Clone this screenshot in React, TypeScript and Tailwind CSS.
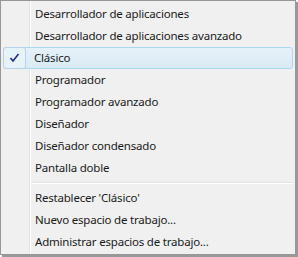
const top = [
  'Desarrollador de aplicaciones',
  'Desarrollador de aplicaciones avanzado',
  'Clásico',
  'Programador',
  'Programador avanzado',
  'Diseñador',
  'Diseñador condensado',
  'Pantalla doble',
]

const bottom = ["Restablecer 'Clásico'", 'Nuevo espacio de trabajo...', 'Administrar espacios de trabajo...']

function Item({ label, checked }: { label: string; checked?: boolean }) {
  if (checked) {
    return (
      <div className="h-[22px] px-[2px]">
        <div className="relative flex h-full items-center rounded-[3px] border border-[#a9d9ee] bg-[linear-gradient(to_bottom,#e6f1f8,#d9eaf4)]">
          <span className="flex h-[22px] w-[23px] -ml-px -mt-px items-center justify-center self-start rounded-[3px] border border-[#b6d2e6] bg-[#e8f2f9]">
            <svg width="11" height="10" viewBox="0 0 11 10">
              <path d="M1.5 5 L4 8 L9.5 1" fill="none" stroke="#1b2a8e" strokeWidth="1.6" />
            </svg>
          </span>
          <span className="ml-[8px]">{label}</span>
        </div>
      </div>
    )
  }
  return (
    <div className="flex h-[22px] items-center pl-[34px]">
      <span>{label}</span>
    </div>
  )
}

export default function App() {
  return (
    <div className="h-[257px] w-[298px] bg-white">
      <div
        className="flex h-[255px] w-[296px] flex-col border border-[#979797] bg-[#f0f0f0] bg-[linear-gradient(to_right,#f0f0f0_28px,#e2e3e3_28px,#e2e3e3_29px,#ffffff_29px,#ffffff_30px,#f0f0f0_30px)] pt-[2px] text-[11.5px] tracking-[-0.2px] text-[#1a1a1a] shadow-[2px_2px_1px_rgba(0,0,0,0.4)]"
        style={{ fontFamily: '"Segoe UI", "Noto Sans", sans-serif' }}
      >
        {top.map((t) => (
          <Item key={t} label={t} checked={t === 'Clásico'} />
        ))}
        <div className="flex h-[8px] items-center pl-[30px] pr-[2px]">
          <div className="h-[2px] w-full border-t border-b border-t-[#e2e3e3] border-b-white" />
        </div>
        {bottom.map((t) => (
          <Item key={t} label={t} />
        ))}
      </div>
    </div>
  )
}
